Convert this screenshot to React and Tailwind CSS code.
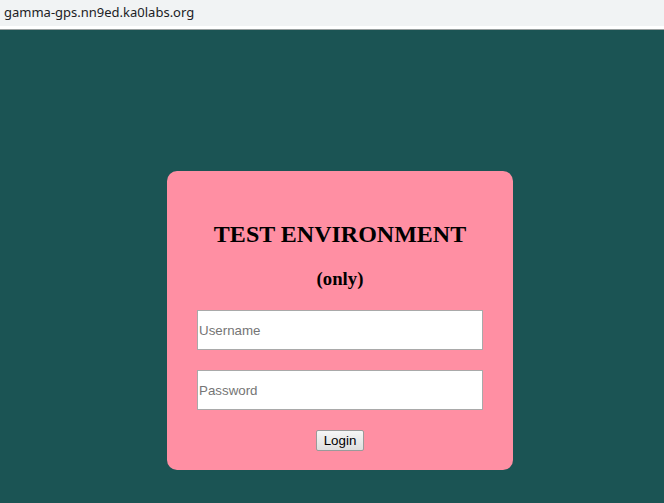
export default function App() {
  return (
    <div className="flex h-screen flex-col overflow-hidden bg-[#1b5454]">
      <div className="flex h-[26px] shrink-0 items-center bg-[#f1f3f4] pl-[4px] font-['Noto_Sans',sans-serif] text-[13px] text-[#202124]">
        gamma-gps.nn9ed.ka0labs.org
      </div>
      <div className="h-[3px] shrink-0 bg-white" />
      <div className="h-px shrink-0 bg-[#9aa0a0]" />

      <div className="flex flex-1 items-start pl-[167px] pt-[141px]">
        <form
          className="flex w-[346px] flex-col items-center rounded-[10px] bg-[#ff8fa3] px-[30px] pb-[19px] pt-[49px]"
          onSubmit={(e) => e.preventDefault()}
        >
          <h1 className="font-['Liberation_Serif',serif] text-[24px] font-bold leading-[28px] text-black">
            TEST ENVIRONMENT
          </h1>
          <h3 className="mt-[20px] font-['Liberation_Serif',serif] text-[18.72px] font-bold leading-[22px] text-black">
            (only)
          </h3>
          <input
            type="text"
            placeholder="Username"
            className="mt-[20px] h-[40px] w-full border border-[#a9a9a9] bg-white px-px font-['Liberation_Sans',sans-serif] text-[13.33px] text-black outline-none placeholder:text-[#757575]"
          />
          <input
            type="password"
            placeholder="Password"
            className="mt-[20px] h-[40px] w-full border border-[#a9a9a9] bg-white px-px font-['Liberation_Sans',sans-serif] text-[13.33px] text-black outline-none placeholder:text-[#757575]"
          />
          <button
            type="submit"
            className="mt-[20px] h-[21px] w-[48px] rounded-[2px] border border-[#9a9a9a] bg-gradient-to-b from-[#f6f6f6] to-[#dedede] font-['Liberation_Sans',sans-serif] text-[13.33px] leading-none text-black"
          >
            Login
          </button>
        </form>
      </div>
    </div>
  );
}
